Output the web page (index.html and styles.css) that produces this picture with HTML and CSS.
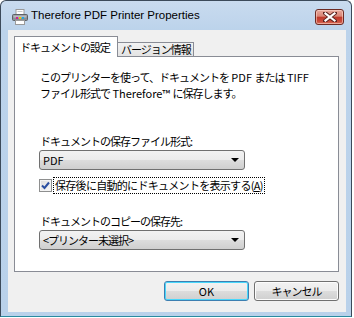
FILE: index.html
```html
<!DOCTYPE html>
<html lang="ja">
<head>
<meta charset="utf-8">
<title>Therefore PDF Printer Properties</title>
<link rel="stylesheet" href="styles.css">
</head>
<body>
<div class="window">
  <div class="titlebar">
    <svg class="app-icon" width="16" height="16" viewBox="0 0 16 16">
      <rect x="4" y="0.5" width="8" height="5" fill="#fff" stroke="#9a9a9a"/>
      <line x1="5.5" y1="2.5" x2="10.5" y2="2.5" stroke="#c8c8c8"/>
      <rect x="0.5" y="5.5" width="15" height="6" rx="1" fill="#8c8f94" stroke="#5d6066"/>
      <rect x="1.5" y="6.5" width="13" height="2" fill="#b7bbc1"/>
      <rect x="4" y="8" width="2" height="2" fill="#d02090"/>
      <rect x="7" y="8" width="2" height="2" fill="#e8c800"/>
      <rect x="10" y="8" width="2" height="2" fill="#20a8e0"/>
      <rect x="3.5" y="11.5" width="9" height="4" fill="#fff" stroke="#9a9a9a"/>
    </svg>
    <span class="title">Therefore PDF Printer Properties</span>
    <div class="close-btn">
      <svg width="14" height="10" viewBox="0 0 14 10">
        <path d="M2 1 L12 9 M12 1 L2 9" stroke="#5a2420" stroke-width="4" stroke-linecap="square"/>
        <path d="M2.5 1.5 L11.5 8.5 M11.5 1.5 L2.5 8.5" stroke="#fff" stroke-width="2.2" stroke-linecap="square"/>
      </svg>
    </div>
  </div>
  <div class="client">
    <div class="tabs">
      <div class="tab active">ドキュメントの設定</div>
      <div class="tab">バージョン情報</div>
    </div>
    <div class="panel">
      <p class="desc">このプリンターを使って、ドキュメントを<span class="lat"> PDF </span>または<span class="lat"> TIFF</span><br>ファイル形式で<span class="lat"> Therefore™ </span>に保存します。</p>
      <div class="label first">ドキュメントの保存ファイル形式:</div>
      <div class="combo"><span class="lat">PDF</span><span class="arrow"></span></div>
      <div class="check-row">
        <span class="checkbox">
          <svg width="9" height="9" viewBox="0 0 9 9"><path d="M1 4.5 L3.5 7 L8 1.5" fill="none" stroke="#2a4ea0" stroke-width="2"/></svg>
        </span>
        <span class="check-label">保存後に自動的にドキュメントを表示する(<u>A</u>)</span>
      </div>
      <div class="label">ドキュメントのコピーの保存先:</div>
      <div class="combo"><span>&lt;プリンター未選択&gt;</span><span class="arrow"></span></div>
    </div>
    <div class="buttons">
      <div class="btn default"><span class="lat">OK</span></div>
      <div class="btn">キャンセル</div>
    </div>
  </div>
</div>
</body>
</html>
```

FILE: styles.css
```css
html, body {
  margin: 0;
  padding: 0;
  background: #ffffff;
}

body {
  font-family: "Noto Sans CJK JP", sans-serif;
  font-size: 11px;
  color: #000;
}

.lat {
  letter-spacing: 0;
}

.window {
  width: 352px;
  height: 317px;
  box-sizing: border-box;
  border: 1px solid #3c4a5a;
  border-bottom-color: #2a8aa0;
  border-radius: 6px 6px 0 0;
  background: linear-gradient(#c9dbef, #bcd3eb 29px, #b9d1ea);
  padding: 0 5px 4px 7px;
  display: flex;
  flex-direction: column;
}

.titlebar {
  height: 29px;
  display: flex;
  align-items: flex-start;
  flex: none;
}

.app-icon {
  margin: 8px 0 0 4px;
  flex: none;
}

.title {
  font-family: "Liberation Sans", sans-serif;
  font-size: 11.5px;
  margin: 8px 0 0 3px;
  color: #000;
}

.close-btn {
  margin: 8px 2px 0 auto;
  width: 29px;
  height: 16px;
  box-sizing: border-box;
  border: 1px solid #6d2b24;
  border-radius: 3px;
  background: linear-gradient(#e8a89c, #d98576 45%, #c0392b 50%, #c94a3a 80%, #d9745f);
  box-shadow: inset 0 0 0 1px rgba(255, 220, 210, 0.55);
  display: flex;
  align-items: center;
  justify-content: center;
}

.client {
  flex: 1;
  background: #f0f0f0;
  padding: 6px 7px 0 6px;
  display: flex;
  flex-direction: column;
}

.tabs {
  display: flex;
  align-items: flex-end;
  height: 20px;
  position: relative;
  z-index: 1;
}

.tab {
  box-sizing: border-box;
  height: 14px;
  padding: 0 2px 0 3px;
  border: 1px solid #898c95;
  border-bottom: none;
  background: linear-gradient(#f2f2f2, #e3e3e3);
  line-height: 12px;
  letter-spacing: -1px;
  margin-left: -1px;
}

.tab.active {
  height: 21px;
  margin-bottom: -1px;
  margin-left: 0;
  padding: 3px 7px 0 5px;
  background: #fff;
  line-height: 14px;
}

.panel {
  height: 216px;
  box-sizing: border-box;
  border: 1px solid #898c95;
  background: #fff;
  padding: 0 0 0 24px;
}

.desc {
  margin: 12px 0 0 1px;
  line-height: 16px;
  letter-spacing: -1px;
}

.label {
  margin: 21px 0 0 1px;
  line-height: 13px;
  letter-spacing: -1px;
}

.label.first {
  margin-top: 34px;
}

.combo {
  margin-top: 2px;
  width: 206px;
  height: 20px;
  box-sizing: border-box;
  border: 1px solid #707070;
  border-radius: 3px;
  background: linear-gradient(#f2f2f2, #ebebeb 50%, #dddddd 50%, #cfcfcf);
  display: flex;
  align-items: center;
  justify-content: space-between;
  padding: 0 5px 0 3px;
  letter-spacing: -1px;
}

.arrow {
  width: 0;
  height: 0;
  border-left: 4px solid transparent;
  border-right: 4px solid transparent;
  border-top: 4px solid #000;
}

.check-row {
  display: flex;
  align-items: center;
  margin-top: 7px;
}

.checkbox {
  width: 13px;
  height: 13px;
  box-sizing: border-box;
  border: 1px solid #8e8f8f;
  background: linear-gradient(135deg, #dcdcdc, #f8f8f8);
  box-shadow: inset 0 0 0 1px #f4f4f4;
  display: flex;
  align-items: center;
  justify-content: center;
  flex: none;
}

.check-label {
  margin-left: 1px;
  border: 1px dotted #000;
  padding: 1px 1px 1px 1px;
  line-height: 13px;
  letter-spacing: -0.7px;
}

.buttons {
  display: flex;
  justify-content: flex-end;
  gap: 5px;
  margin-top: 9px;
}

.btn {
  width: 85px;
  height: 20px;
  box-sizing: border-box;
  border: 1px solid #707070;
  border-radius: 3px;
  background: linear-gradient(#f2f2f2, #ebebeb 50%, #dddddd 50%, #cfcfcf);
  box-shadow: inset 0 0 0 1px #fcfcfc;
  display: flex;
  align-items: center;
  justify-content: center;
  letter-spacing: -1px;
}

.btn.default {
  border-color: #3c7fb1;
  box-shadow: inset 0 0 0 1px #48d7fb;
}
```
